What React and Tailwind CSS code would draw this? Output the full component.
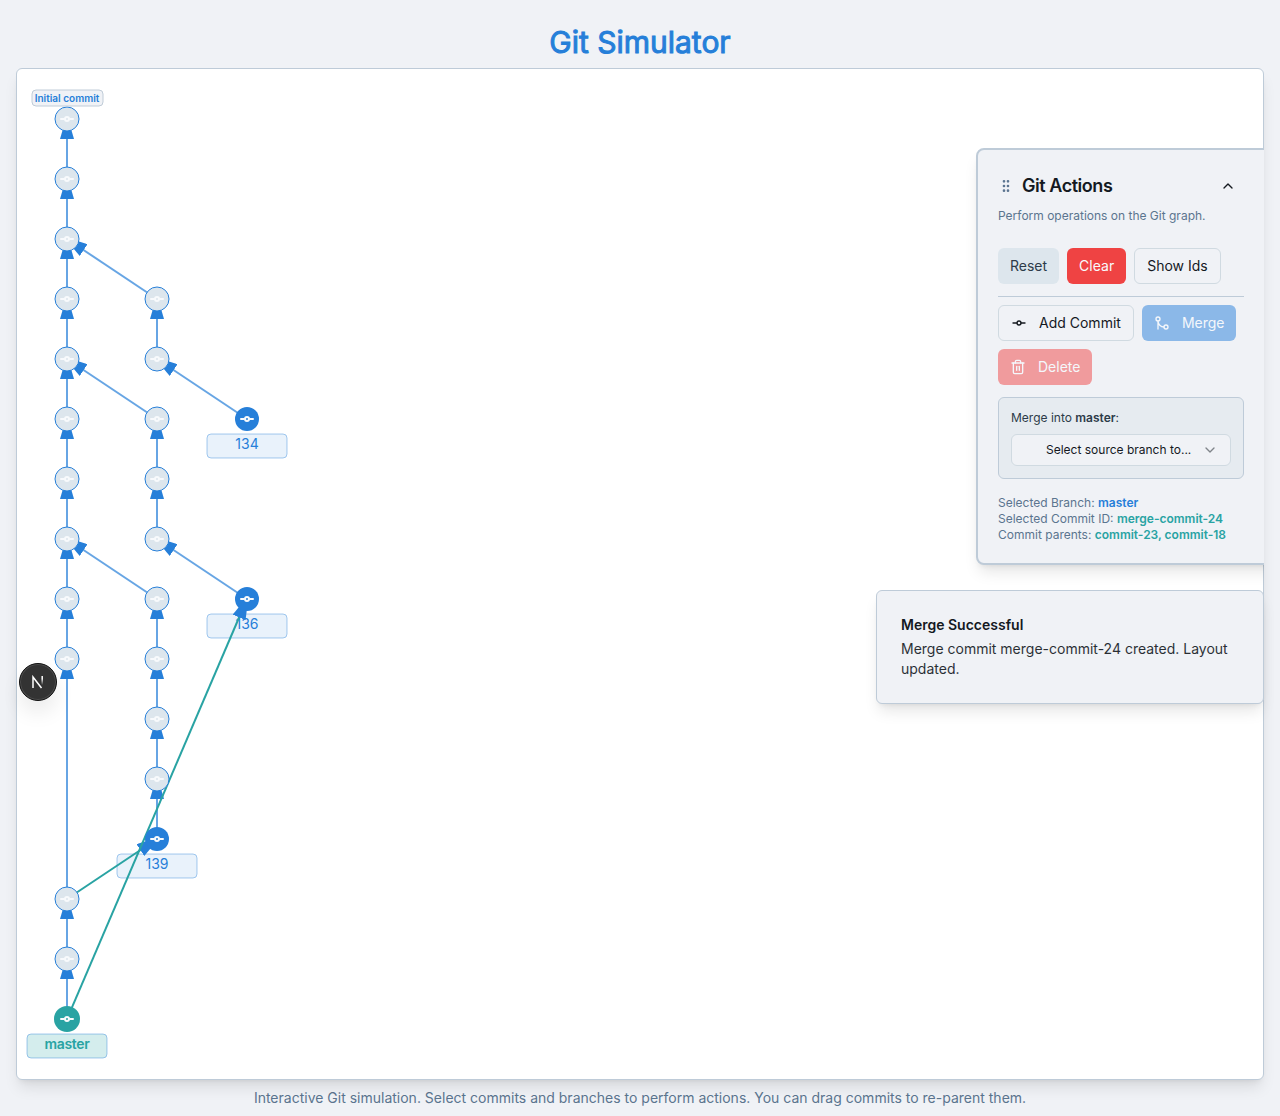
import { GitCommitHorizontal, GitMerge, Trash2, ChevronUp, ChevronDown, GripVertical } from "lucide-react";

const BLUE = "#267fd9";
const TEAL = "#29a3a3";

const commits = [
  [50, 50], [50, 110], [50, 170], [50, 230], [50, 290], [50, 350], [50, 410], [50, 470], [50, 530], [50, 590],
  [50, 830], [50, 890],
  [140, 230], [140, 290], [140, 350], [140, 410], [140, 470], [140, 530], [140, 590], [140, 650], [140, 710],
];

const heads = [
  { x: 230, y: 350, name: "134" },
  { x: 230, y: 530, name: "136" },
  { x: 140, y: 770, name: "139" },
  { x: 50, y: 950, name: "master", selected: true },
];

const edges = [
  [50, 110, 50, 50], [50, 170, 50, 110], [50, 230, 50, 170], [50, 290, 50, 230], [50, 350, 50, 290],
  [50, 410, 50, 350], [50, 470, 50, 410], [50, 530, 50, 470], [50, 590, 50, 530], [50, 830, 50, 590],
  [50, 890, 50, 830], [50, 950, 50, 890],
  [140, 230, 50, 170], [140, 290, 140, 230], [230, 350, 140, 290],
  [140, 350, 50, 290], [140, 410, 140, 350], [140, 470, 140, 410], [230, 530, 140, 470],
  [140, 530, 50, 470], [140, 590, 140, 530], [140, 650, 140, 590], [140, 710, 140, 650], [140, 770, 140, 710],
];

const mergeEdges = [
  [50, 830, 140, 770],
  [50, 950, 230, 530],
];

function CommitMark({ x, y }) {
  return (
    <g stroke="#f8fafc" strokeWidth="2" fill="none" strokeLinecap="round">
      <circle cx={x} cy={y} r="2" />
      <path d={`M${x - 6} ${y}H${x - 3}M${x + 3} ${y}H${x + 6}`} />
    </g>
  );
}

function Graph() {
  return (
    <svg className="block h-[1010px] w-full" role="img" aria-label="Commit graph">
      <defs>
        <marker id="arrow" viewBox="0 0 12 7" refX="10" refY="3.5" markerWidth="12" markerHeight="7" orient="auto">
          <polygon points="0 0, 12 3.5, 0 7" fill={BLUE} />
        </marker>
      </defs>
      {heads.map((h) => (
        <g key={h.name}>
          <rect
            x={h.x - 40} y={h.y + 15} width="80" height="24" rx="4"
            fill={h.selected ? TEAL : BLUE} fillOpacity={h.selected ? 0.2 : 0.1}
            stroke={BLUE} strokeOpacity="0.4"
          />
          <text
            x={h.x} y={h.y + 30} textAnchor="middle" fill={h.selected ? TEAL : BLUE}
            className={h.selected ? "text-sm font-semibold tracking-tight" : "text-sm"}
          >
            {h.name}
          </text>
        </g>
      ))}
      {edges.map((e) => (
        <line key={e.join()} x1={e[0]} y1={e[1]} x2={e[2]} y2={e[3]} stroke={BLUE} strokeOpacity="0.7" strokeWidth="2" markerEnd="url(#arrow)" />
      ))}
      {mergeEdges.map((e) => (
        <line key={e.join()} x1={e[0]} y1={e[1]} x2={e[2]} y2={e[3]} stroke={TEAL} strokeWidth="2" markerEnd="url(#arrow)" />
      ))}
      {commits.map(([x, y]) => (
        <g key={`${x}-${y}`}>
          <circle cx={x} cy={y} r="12" fill="#dde6ed" stroke={BLUE} />
          <CommitMark x={x} y={y} />
        </g>
      ))}
      {heads.map((h) => (
        <g key={h.name}>
          <circle cx={h.x} cy={h.y} r={h.selected ? 13 : 12} fill={h.selected ? TEAL : BLUE} />
          <CommitMark x={h.x} y={h.y} />
        </g>
      ))}
      <rect x="15" y="21" width="71" height="16" rx="4" fill="#f0f2f6" stroke="#c0ccd8" />
      <text x="50" y="33" textAnchor="middle" fill={BLUE} className="text-[10px] font-semibold">Initial commit</text>
    </svg>
  );
}

const button = "inline-flex h-9 items-center justify-center rounded-md px-3 text-sm";

function ActionsPanel() {
  return (
    <section className="pointer-events-auto absolute top-20 right-[-22px] w-[310px] rounded-lg border-2 border-[#becbd8] bg-[#f0f2f6] p-5 pt-4 shadow-lg">
      <div className="flex h-10 items-center">
        <GripVertical className="mr-2 size-4 text-[#5b7490]" />
        <h2 className="flex-1 text-lg font-semibold tracking-tight text-[#14191f]">Git Actions</h2>
        <button type="button" aria-label="Collapse" className="mr-5 flex size-8 items-center justify-center text-[#14191f]">
          <ChevronUp className="size-4" />
        </button>
      </div>
      <p className="mt-0.5 text-xs text-[#5b758f]">Perform operations on the Git graph.</p>
      <div className="mt-6 mr-5 flex gap-2 border-b border-[#becbd8] pb-3">
        <button type="button" className={`${button} bg-[#dde6ed] text-[#2d3b49]`}>Reset</button>
        <button type="button" className={`${button} bg-[#ef4343] text-[#f8fafc]`}>Clear</button>
        <button type="button" className={`${button} border border-[#d0dae1] text-[#14191f]`}>Show Ids</button>
      </div>
      <div className="mt-2 mr-5 flex flex-wrap gap-2">
        <button type="button" className={`${button} gap-3 border border-[#d0dae1] text-[#14191f]`}>
          <GitCommitHorizontal className="size-4" />Add Commit
        </button>
        <button type="button" disabled className={`${button} gap-3 bg-[#8bb8e8] text-[#f4f7fb]`}>
          <GitMerge className="size-4" />Merge
        </button>
        <button type="button" disabled className={`${button} gap-3 bg-[#f09b9d] text-[#f4f7fb]`}>
          <Trash2 className="size-4" />Delete
        </button>
      </div>
      <div className="mt-3 mr-5 rounded-md border border-[#becbd8] bg-[#e6ebf0] p-3">
        <label htmlFor="source" className="block text-xs text-[#2d3b49]">Merge into <b className="font-semibold">master</b>:</label>
        <div className="relative mt-2">
          <select id="source" className="block h-8 w-full appearance-none rounded-md border border-[#d0dae1] bg-[#f0f2f6] pr-9 pl-[34px] text-xs text-[#14191f]">
            <option>Select source branch to...</option>
          </select>
          <ChevronDown className="pointer-events-none absolute top-2 right-[13px] size-4 text-[#80858a]" />
        </div>
      </div>
      <div className="mt-4 text-xs text-[#5b758f]">
        <p>Selected Branch: <b className="font-semibold text-[#267fd9]">master</b></p>
        <p>Selected Commit ID: <b className="font-semibold text-[#29a3a3]">merge-commit-24</b></p>
        <p>Commit parents: <b className="font-semibold text-[#29a3a3]">commit-23, commit-18</b></p>
      </div>
    </section>
  );
}

export default function App() {
  return (
    <div className="flex min-h-screen flex-col bg-[#f0f2f6] px-4 pt-6 font-[Inter,sans-serif]">
      <h1 className="text-center text-3xl leading-9 font-normal text-[#267fd9] [-webkit-text-stroke:1px_#267fd9]">Git Simulator</h1>
      <main className="relative mt-2">
        <div className="rounded-md border border-[#becbd8] bg-white shadow-lg">
          <Graph />
        </div>
        <div className="pointer-events-none absolute inset-0 overflow-hidden">
          <ActionsPanel />
        </div>
        <div role="status" className="absolute top-[522px] right-0 w-[388px] rounded-md border border-[#becbd8] bg-[#f0f2f6] p-6 text-sm text-[#14191f] shadow-lg">
          <p className="font-semibold">Merge Successful</p>
          <p className="mt-1 opacity-90">Merge commit merge-commit-24 created. Layout updated.</p>
        </div>
        <button type="button" aria-label="Developer tools" className="absolute top-[595px] left-[3px] flex size-[38px] items-center justify-center rounded-full border border-[#111111] bg-[#333333] inset-ring inset-ring-[#4d4d4d] shadow-[0_12px_20px_rgba(0,0,0,0.08)]">
          <svg width="14" height="14" viewBox="0 0 14 14" fill="none" strokeWidth="1.5">
            <defs>
              <linearGradient id="stem" gradientUnits="userSpaceOnUse" x1="0" y1="1" x2="0" y2="10">
                <stop offset="0.3" stopColor="#ffffff" />
                <stop offset="1" stopColor="#ffffff" stopOpacity="0" />
              </linearGradient>
            </defs>
            <path stroke="#ffffff" d="M2 13V2L10.5 13" />
            <path stroke="url(#stem)" d="M11.2 1V10" />
          </svg>
        </button>
      </main>
      <footer className="mt-2 pb-2 text-center text-sm text-[#5b758f]">
        Interactive Git simulation. Select commits and branches to perform actions. You can drag commits to re-parent them.
      </footer>
    </div>
  );
}
